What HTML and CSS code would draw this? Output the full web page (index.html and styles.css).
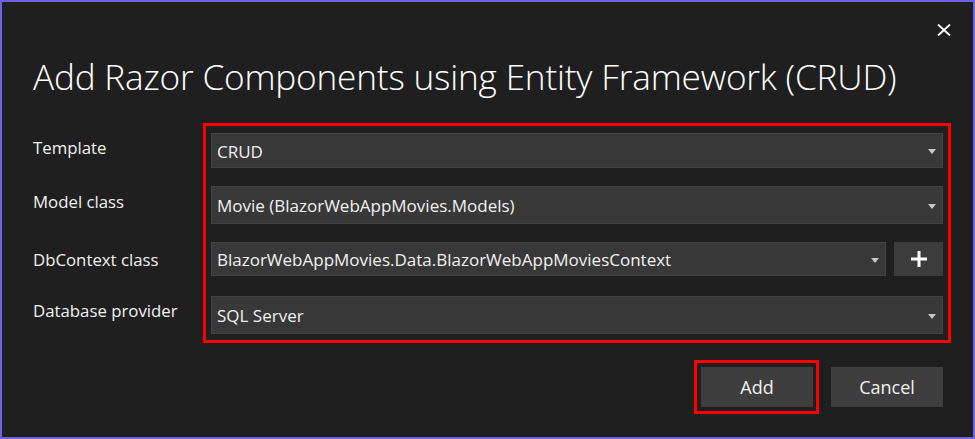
FILE: index.html
```html
<!DOCTYPE html>
<html>
<head>
<meta charset="utf-8">
<link rel="stylesheet" href="styles.css">
</head>
<body>
<div class="dialog">
  <div class="header">
    <button class="close" aria-label="Close">
      <svg width="14" height="12" viewBox="0 0 14 12"><path d="M1 0.5 L13 11.5 M13 0.5 L1 11.5" stroke="#ffffff" stroke-width="1.8" fill="none"/></svg>
    </button>
  </div>
  <h1 class="title">Add Razor Components using Entity Framework (CRUD)</h1>
  <div class="form">
    <div class="highlight"></div>
    <div class="label l1">Template</div>
    <div class="field f1 r1"><span class="value">CRUD</span><span class="arrow"></span></div>
    <div class="label l2">Model class</div>
    <div class="field f2 r2"><span class="value">Movie (BlazorWebAppMovies.Models)</span><span class="arrow"></span></div>
    <div class="label l3">DbContext class</div>
    <div class="fieldrow r3">
      <div class="field f3"><span class="value">BlazorWebAppMovies.Data.BlazorWebAppMoviesContext</span><span class="arrow"></span></div>
      <button class="plus" aria-label="Add">
        <svg width="16" height="16" viewBox="0 0 16 16"><path d="M8 0 V16 M0 8 H16" stroke="#ffffff" stroke-width="3" fill="none"/></svg>
      </button>
    </div>
    <div class="label l4">Database provider</div>
    <div class="field f4 r4"><span class="value">SQL Server</span><span class="arrow"></span></div>
  </div>
  <div class="actions">
    <div class="focus"><button class="btn">Add</button></div>
    <button class="btn cancel">Cancel</button>
  </div>
</div>
</body>
</html>
```

FILE: styles.css
```css
* { box-sizing: border-box; }
html, body { margin: 0; padding: 0; background: #1f1f1f; }
body { font-family: "Open Sans", "Noto Sans", sans-serif; color: #f1f1f1; }

.dialog {
  width: 975px;
  height: 439px;
  border: 2px solid #6f63e2;
  background: #1f1f1f;
  padding: 0 22px 0 31px;
  display: flex;
  flex-direction: column;
}

.header {
  display: flex;
  justify-content: flex-end;
  padding-top: 22px;
  height: 36px;
}
.close {
  background: none;
  border: 0;
  padding: 0;
  margin-right: 0;
  width: 14px;
  height: 12px;
  display: flex;
}

.title {
  margin: 15px 0 0 0;
  font-weight: 300;
  font-size: 35.2px;
  line-height: 46px;
  letter-spacing: -0.2px;
  color: #ffffff;
  white-space: nowrap;
}

.form {
  margin-top: 24px;
  display: grid;
  grid-template-columns: 170px 748px;
  grid-template-rows: auto auto auto auto;
  row-gap: 18px;
}
.highlight {
  grid-column: 2;
  grid-row: 1 / 5;
  border: 3px solid #ff0000;
}
.label {
  grid-column: 1;
  align-self: center;
  font-size: 16.8px;
  line-height: 22px;
  color: #f1f1f1;
  white-space: nowrap;
}
.l1 { grid-row: 1; margin-top: 10px; margin-bottom: 6px; }
.l2 { grid-row: 2; margin-bottom: 6px; }
.l3 { grid-row: 3; margin-top: 2px; }
.l4 { grid-row: 4; margin-bottom: 16px; }

.r1 { grid-row: 1; margin-top: 10px; height: 35px; }
.r2 { grid-row: 2; height: 38px; }
.r3 { grid-row: 3; height: 34px; }
.r4 { grid-row: 4; margin-top: 2px; margin-bottom: 9px; height: 38px; }

.field {
  grid-column: 2;
  margin-left: 8px;
  margin-right: 8px;
  background: #383838;
  border: 1px solid #434343;
  display: flex;
  align-items: center;
  padding: 0 0 0 5px;
  font-size: 17px;
  color: #f1f1f1;
  white-space: nowrap;
}
.field .value { flex: 1; padding-top: 1px; }
.arrow {
  width: 0;
  height: 0;
  border-left: 4.5px solid transparent;
  border-right: 4.5px solid transparent;
  border-top: 5px solid #c8c8c8;
  margin-right: 6px;
  margin-top: 2px;
}

.fieldrow {
  grid-column: 2;
  margin: 0 8px;
  display: flex;
  gap: 8px;
}
.fieldrow .field {
  margin: 0;
  flex: 1;
}
.plus {
  width: 49px;
  height: 34px;
  background: #3c3c3c;
  border: 0;
  padding: 0;
  display: flex;
  align-items: center;
  justify-content: center;
}

.actions {
  margin-top: 17px;
  display: flex;
  justify-content: flex-end;
  align-items: center;
  gap: 12px;
  padding-right: 8px;
}
.focus {
  border: 3px solid #ff0000;
  padding: 4px 3px 4px 4px;
  display: flex;
}
.btn {
  width: 112px;
  height: 40px;
  background: #3e3e3e;
  border: 0;
  color: #f1f1f1;
  font-family: "Open Sans", "Noto Sans", sans-serif;
  font-size: 18px;
  padding: 0;
}
```
